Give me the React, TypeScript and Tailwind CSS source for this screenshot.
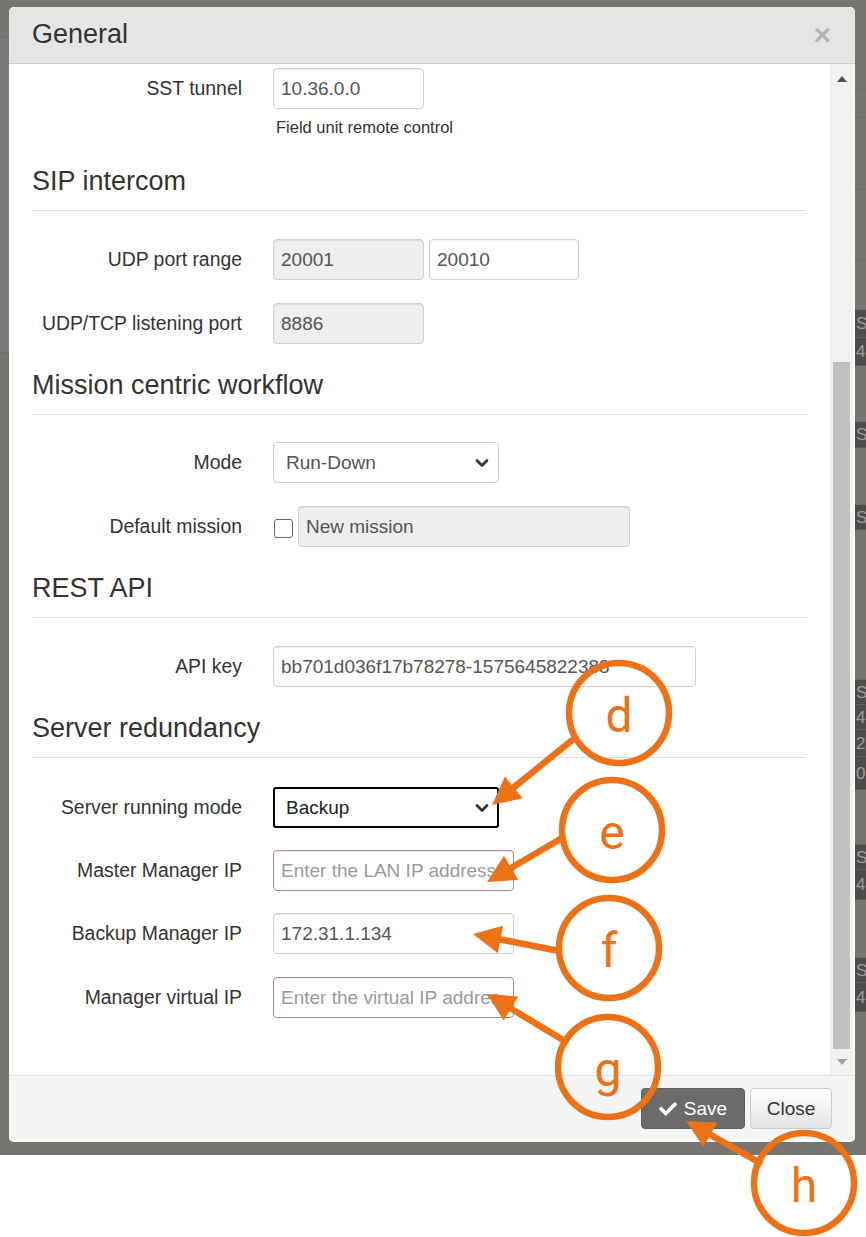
import React from "react";
import { FaCheck } from "react-icons/fa";

const ORANGE = "#ED7117";

function Row({ label, children }: { label: string; children: React.ReactNode }) {
  return (
    <div className="flex items-center h-[41px]">
      <div className="w-[210px] shrink-0 text-right text-[19.4px] leading-none text-[#333]">{label}</div>
      <div className="ml-[31px] flex items-center">{children}</div>
    </div>
  );
}

function Box({
  cls,
  value,
  placeholder,
  disabled,
  invalid,
}: {
  cls: string;
  value?: string;
  placeholder?: string;
  disabled?: boolean;
  invalid?: boolean;
}) {
  const border = invalid ? "border-[#b98585]" : "border-[#cfcfcf]";
  const bg = disabled ? "bg-[#eeeeee]" : "bg-white";
  return (
    <div
      className={`${cls} ${border} ${bg} h-[41px] rounded-[4px] border shadow-[inset_0_1px_1px_rgba(0,0,0,0.075)] pl-[7px] pr-[10px] flex items-center`}
    >
      <div className="overflow-hidden whitespace-nowrap w-full text-[19px] leading-none">
        {value ? <span className="text-[#555]">{value}</span> : <span className="text-[#9a9a9a]">{placeholder}</span>}
      </div>
    </div>
  );
}

function Select({ value, focused }: { value: string; focused?: boolean }) {
  return (
    <div
      className={`w-[226px] h-[41px] flex items-center justify-between bg-white ${
        focused ? "border-2 border-black rounded-[3px] pl-[11px] pr-[8px]" : "border border-[#cfcfcf] rounded-[4px] pl-[12px] pr-[9px]"
      }`}
    >
      <span className={`text-[19px] leading-none ${focused ? "text-[#222]" : "text-[#555]"}`}>{value}</span>
      <svg width="14" height="10" viewBox="0 0 14 10">
        <path d="M2 2.5 L7 7.5 L12 2.5" fill="none" stroke="#333" strokeWidth="2.6" strokeLinecap="round" strokeLinejoin="round" />
      </svg>
    </div>
  );
}

function Section({ title, first }: { title: string; first?: boolean }) {
  return (
    <>
      <div className={`${first ? "mt-[28px]" : "mt-[25px]"} h-[32px] flex items-center text-[27px] leading-none text-[#333]`}>
        {title}
      </div>
      <div className="mt-[13px] h-px bg-[#e0e0e0]" />
    </>
  );
}

function Arrow({ sx, sy, tx, ty }: { sx: number; sy: number; tx: number; ty: number }) {
  const dx = tx - sx;
  const dy = ty - sy;
  const len = Math.hypot(dx, dy);
  const ux = dx / len;
  const uy = dy / len;
  const L = 28;
  const W = 14;
  const bx = tx - ux * L;
  const by = ty - uy * L;
  const px = -uy;
  const py = ux;
  const pts = `${tx},${ty} ${bx + px * W},${by + py * W} ${bx - px * W},${by - py * W}`;
  return (
    <g>
      <line x1={sx} y1={sy} x2={bx + ux * 4} y2={by + uy * 4} stroke={ORANGE} strokeWidth={6.5} />
      <polygon points={pts} fill={ORANGE} />
    </g>
  );
}

function Badge({ cx, cy, letter }: { cx: number; cy: number; letter: string }) {
  return (
    <g>
      <circle cx={cx} cy={cy} r={50} fill="none" stroke={ORANGE} strokeWidth={6.5} />
      <text
        x={cx}
        y={cy + 19}
        textAnchor="middle"
        fill={ORANGE}
        fontSize={48}
        fontFamily="Roboto, 'Liberation Sans', sans-serif"
      >
        {letter}
      </text>
    </g>
  );
}

function RightStrip() {
  const Dark = ({ h, t }: { h: string; t: string }) => (
    <div className={`${h} bg-[#4c4c4c] border-b border-[#5c5c5c] text-[#9a9a9a] text-[17px] leading-none flex items-center pl-[1px] overflow-hidden`}>
      {t}
    </div>
  );
  const Gap = ({ h }: { h: string }) => <div className={`${h} border-b border-[#6c6c6c]`} />;
  return (
    <div className="w-[11px] shrink-0 flex flex-col overflow-hidden">
      <Gap h="h-[90px]" />
      <Gap h="h-[28px]" />
      <Gap h="h-[72px]" />
      <Gap h="h-[70px]" />
      <Gap h="h-[50px]" />
      <Dark h="h-[28px]" t="S" />
      <Dark h="h-[28px]" t="4" />
      <Gap h="h-[56px]" />
      <Dark h="h-[26px]" t="S" />
      <Gap h="h-[57px]" />
      <Dark h="h-[25px]" t="S" />
      <Gap h="h-[150px]" />
      <Dark h="h-[25px]" t="S" />
      <Dark h="h-[25px]" t="4" />
      <Dark h="h-[27px]" t="2" />
      <Dark h="h-[33px]" t="0" />
      <Gap h="h-[55px]" />
      <Dark h="h-[25px]" t="S" />
      <Dark h="h-[30px]" t="4" />
      <Gap h="h-[58px]" />
      <Dark h="h-[25px]" t="S" />
      <Dark h="h-[29px]" t="4" />
      <div className="flex-1" />
    </div>
  );
}

export default function App() {
  return (
    <div className="relative w-[866px] h-[1237px] bg-white overflow-hidden font-['Liberation_Sans',Arial,sans-serif]">
      <div className="h-[1155px] bg-[#767570] flex">
        <div className="w-[9px] shrink-0 flex flex-col">
          <div className="h-[38px] border-b border-[#6e6e6e]" />
          <div className="h-[315px] bg-[#7a7a7a] border-b border-[#6e6e6e]" />
        </div>
        <div className="mt-[7px] w-[846px] h-[1135px] bg-white rounded-[5px] overflow-hidden flex flex-col shrink-0">
          {/* header */}
          <div className="h-[57px] shrink-0 bg-[#e5e5e5] border-b border-[#cfcfcf] flex items-center justify-between pl-[23px] pr-[24px]">
            <div className="text-[27px] leading-none text-[#333] mt-[-1px]">General</div>
            <div className="text-[30px] leading-none font-bold text-[#b3b3b3]">×</div>
          </div>
          {/* body */}
          <div className="h-[1011px] shrink-0 flex">
            <div className="flex-1 pl-[23px] pr-[24px] pt-[4px] flex flex-col">
              <Row label="SST tunnel">
                <Box cls="w-[151px]" value="10.36.0.0" />
              </Row>
              <div className="mt-[8px] ml-[244px] h-[20px] flex items-center text-[16.5px] leading-none text-[#333]">
                Field unit remote control
              </div>

              <Section title="SIP intercom" first />
              <div className="mt-[28px] flex flex-col gap-[23px]">
                <Row label="UDP port range">
                  <div className="flex gap-[5px]">
                    <Box cls="w-[151px]" value="20001" disabled />
                    <Box cls="w-[150px]" value="20010" />
                  </div>
                </Row>
                <Row label="UDP/TCP listening port">
                  <Box cls="w-[151px]" value="8886" disabled />
                </Row>
              </div>

              <Section title="Mission centric workflow" />
              <div className="mt-[27px] flex flex-col gap-[23px]">
                <Row label="Mode">
                  <Select value="Run-Down" />
                </Row>
                <Row label="Default mission">
                  <div className="flex items-center">
                    <div className="ml-[1px] mt-[3px] w-[19px] h-[19px] rounded-[3px] border-[1.5px] border-[#666] bg-white" />
                    <div className="ml-[5px]">
                      <Box cls="w-[332px]" value="New mission" disabled />
                    </div>
                  </div>
                </Row>
              </div>

              <Section title="REST API" />
              <div className="mt-[28px] flex flex-col">
                <Row label="API key">
                  <Box cls="w-[423px]" value="bb701d036f17b78278-1575645822388" />
                </Row>
              </div>

              <Section title="Server redundancy" />
              <div className="mt-[29px] flex flex-col">
                <Row label="Server running mode">
                  <Select value="Backup" focused />
                </Row>
                <div className="mt-[22px]">
                  <Row label="Master Manager IP">
                    <Box cls="w-[241px]" placeholder="Enter the LAN IP address" invalid />
                  </Row>
                </div>
                <div className="mt-[22px]">
                  <Row label="Backup Manager IP">
                    <Box cls="w-[241px]" value="172.31.1.134" />
                  </Row>
                </div>
                <div className="mt-[23px]">
                  <Row label="Manager virtual IP">
                    <Box cls="w-[241px]" placeholder="Enter the virtual IP address" invalid />
                  </Row>
                </div>
              </div>
            </div>
            {/* scrollbar */}
            <div className="w-[23px] mr-[2px] shrink-0 bg-[#f1f1f1] flex flex-col">
              <div className="h-[30px] flex items-center justify-center">
                <svg width="10" height="6" viewBox="0 0 10 6">
                  <path d="M0 6 L5 0 L10 6 Z" fill="#505050" />
                </svg>
              </div>
              <div className="h-[268px]" />
              <div className="h-[687px] mx-[3px] bg-[#c1c1c1]" />
              <div className="flex-1 flex items-center justify-center">
                <svg width="10" height="6" viewBox="0 0 10 6">
                  <path d="M0 0 L5 6 L10 0 Z" fill="#a3a3a3" />
                </svg>
              </div>
            </div>
          </div>
          {/* footer */}
          <div className="h-[66px] shrink-0 border-t border-[#e2e2e2] border-b border-b-white bg-[#f5f5f5] flex justify-end items-start pt-[12px] pr-[23px] gap-[5px]">
            <div className="w-[104px] h-[41px] rounded-[4px] bg-[#6b6b6b] border border-[#5f5f5f] flex items-center justify-center gap-[7px] text-white text-[19px] leading-none">
              <FaCheck className="w-[18px] h-[18px]" />
              <span>Save</span>
            </div>
            <div className="w-[82px] h-[41px] rounded-[4px] bg-linear-to-b from-white to-[#e3e3e3] border border-[#cccccc] flex items-center justify-center text-[#333] text-[19px] leading-none">
              Close
            </div>
          </div>
        </div>
        <RightStrip />
      </div>

      <svg className="absolute left-0 top-0 w-[866px] h-[1237px] pointer-events-none" viewBox="0 0 866 1237">
        <Arrow sx={576} sy={737} tx={492} ty={805} />
        <Arrow sx={562} sy={838} tx={487} ty={882} />
        <Arrow sx={559} sy={951} tx={473} ty={934} />
        <Arrow sx={568} sy={1043} tx={487} ty={994} />
        <Arrow sx={762} sy={1164} tx={686} ty={1121} />
        <Badge cx={619} cy={713} letter="d" />
        <Badge cx={612} cy={830} letter="e" />
        <Badge cx={609} cy={948} letter="f" />
        <Badge cx={608} cy={1067} letter="g" />
        <Badge cx={804} cy={1183} letter="h" />
      </svg>
    </div>
  );
}
